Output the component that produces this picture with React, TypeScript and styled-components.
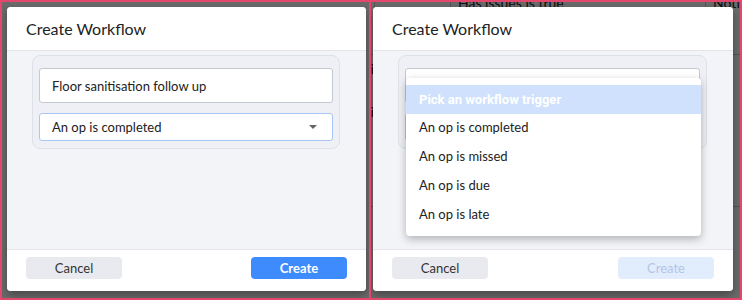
import React from 'react';
import styled, { createGlobalStyle } from 'styled-components';

const GlobalStyle = createGlobalStyle`
  html, body {
    margin: 0;
    padding: 0;
    background: #ffffff;
  }
  * {
    box-sizing: border-box;
  }
`;

const Board = styled.div`
  width: 742px;
  height: 300px;
  display: flex;
  border: 2px solid #e4466c;
  background: #e4466c;
  gap: 2px;
  overflow: hidden;
`;

const Frame = styled.div<{ $pad: string; $width: number }>`
  position: relative;
  width: ${(p) => p.$width}px;
  flex: none;
  display: flex;
  padding: ${(p) => p.$pad};
  background: #ffffff;
  overflow: hidden;
`;

// what sits behind the overlay on the right capture
const Backdrop = styled.div`
  position: absolute;
  inset: -7px 0 0 0;
  display: grid;
  grid-template-columns: 3px 76px 255px 1fr;
  grid-template-rows: 60px 152px 1fr;
  font-family: 'Lato', sans-serif;
  font-size: 14px;
  color: #222;
`;

const BackCell = styled.div<{ $line?: boolean; $right?: boolean; $edge?: boolean }>`
  padding: ${(p) => (p.$edge ? '6px 0 0' : '0 7px')};
  border-bottom: ${(p) => (p.$line ? '1px solid #c9c9c9' : 'none')};
  border-left: ${(p) => (p.$right ? '1px solid #c9c9c9' : 'none')};
  display: flex;
  flex-direction: column;
  align-items: ${(p) => (p.$edge ? 'flex-end' : 'flex-start')};
  gap: ${(p) => (p.$edge ? '27px' : '12px')};
  line-height: 16px;
  white-space: nowrap;
`;

const Overlay = styled.div`
  position: absolute;
  inset: 0;
  background: rgba(0, 0, 0, 0.58);
`;

const Modal = styled.div`
  position: relative;
  flex: 1;
  display: flex;
  flex-direction: column;
  background: #f3f4f8;
  border-radius: 4px;
  box-shadow: 0 4px 10px rgba(0, 0, 0, 0.35);
`;

const Header = styled.div`
  height: 44px;
  padding: 0 19px;
  display: flex;
  align-items: center;
  background: #ffffff;
  border-bottom: 1px solid #e3e5ea;
  border-radius: 4px 4px 0 0;
  font-family: 'Lato', sans-serif;
  font-size: 16px;
  color: #222;
`;

const Body = styled.div`
  flex: 1;
  padding: 4px 26px 0 25px;
`;

const Card = styled.div`
  position: relative;
  display: flex;
  flex-direction: column;
  gap: 10px;
  padding: 12px 6px 7px 6px;
  background: #eef0f5;
  border: 1px solid #dde1e8;
  border-radius: 8px;
`;

const TextField = styled.div`
  height: 35px;
  padding: 0 12px;
  display: flex;
  align-items: center;
  background: #ffffff;
  border: 1px solid #c4c8cf;
  border-radius: 3px;
  font-family: 'Lato', sans-serif;
  font-size: 13px;
  color: #222;
`;

const SelectField = styled(TextField)`
  height: 28px;
  justify-content: space-between;
  border-color: #a9c7f6;
`;

const Caret = styled.span`
  width: 0;
  height: 0;
  margin-right: 3px;
  border-left: 4px solid transparent;
  border-right: 4px solid transparent;
  border-top: 4px solid #666;
`;

const Menu = styled.div`
  position: absolute;
  top: 22px;
  left: 7px;
  right: 5px;
  padding: 7px 0 6px;
  background: #ffffff;
  border-radius: 4px;
  box-shadow: 0 3px 8px rgba(0, 0, 0, 0.28);
  z-index: 2;
`;

const Option = styled.div<{ $active?: boolean }>`
  height: 29px;
  padding: ${(p) => (p.$active ? '0 13px' : '0 13px 3px')};
  display: flex;
  align-items: center;
  background: ${(p) => (p.$active ? '#cfe1fc' : 'transparent')};
  font-family: ${(p) => (p.$active ? "'Roboto', sans-serif" : "'Lato', sans-serif")};
  font-weight: ${(p) => (p.$active ? 700 : 400)};
  font-size: 13px;
  color: ${(p) => (p.$active ? '#ffffff' : '#222')};
`;

const Footer = styled.div`
  height: 42px;
  padding: 7px 19px 0;
  display: flex;
  align-items: flex-start;
  justify-content: space-between;
  background: #ffffff;
  border-top: 1px solid #e3e5ea;
  border-radius: 0 0 4px 4px;
`;

const Button = styled.button<{ $variant: 'plain' | 'primary' | 'disabled' }>`
  width: 96px;
  height: 22px;
  padding: 0 0 1px;
  border: none;
  border-radius: 4px;
  font-family: 'Lato', sans-serif;
  font-size: 13px;
  font-weight: ${(p) => (p.$variant === 'primary' ? 700 : 400)};
  background: ${(p) =>
    p.$variant === 'primary' ? '#3d8bfd' : p.$variant === 'disabled' ? '#e1ecfd' : '#e9eaef'};
  color: ${(p) =>
    p.$variant === 'primary' ? '#ffffff' : p.$variant === 'disabled' ? '#b3c6e6' : '#333'};
`;

const triggers = ['An op is completed', 'An op is missed', 'An op is due', 'An op is late'];

const App: React.FC = () => {
  return (
    <>
      <GlobalStyle />
      <Board>
        <Frame $width={367} $pad='5px 3px 7px 5px'>
          <Overlay />
          <Modal>
            <Header>Create Workflow</Header>
            <Body>
              <Card>
                <TextField>Floor sanitisation follow up</TextField>
                <SelectField>
                  An op is completed
                  <Caret />
                </SelectField>
              </Card>
            </Body>
            <Footer>
              <Button $variant='plain'>Cancel</Button>
              <Button $variant='primary'>Create</Button>
            </Footer>
          </Modal>
        </Frame>

        <Frame $width={369} $pad='5px 7px 7px 2px'>
          <Backdrop>
            <BackCell $line />
            <BackCell $line $right />
            <BackCell $line $right>
              <span>Has issues is true</span>
            </BackCell>
            <BackCell $line $right>
              <span>Notif</span>
              <span>ad</span>
            </BackCell>
            <BackCell $line $edge>
              <span>i</span>
              <span>i</span>
            </BackCell>
            <BackCell $line />
            <BackCell $line />
            <BackCell $line>
              <span>&nbsp;</span>
              <span>ify</span>
              <span>&nbsp;</span>
              <span>&nbsp;</span>
              <span>ify</span>
            </BackCell>
          </Backdrop>
          <Overlay />
          <Modal>
            <Header>Create Workflow</Header>
            <Body>
              <Card>
                <TextField />
                <SelectField>
                  <span />
                  <Caret />
                </SelectField>
                <Menu>
                  <Option $active>Pick an workflow trigger</Option>
                  {triggers.map((t) => (
                    <Option key={t}>{t}</Option>
                  ))}
                </Menu>
              </Card>
            </Body>
            <Footer>
              <Button $variant='plain'>Cancel</Button>
              <Button $variant='disabled'>Create</Button>
            </Footer>
          </Modal>
        </Frame>
      </Board>
    </>
  );
};

export default App;
